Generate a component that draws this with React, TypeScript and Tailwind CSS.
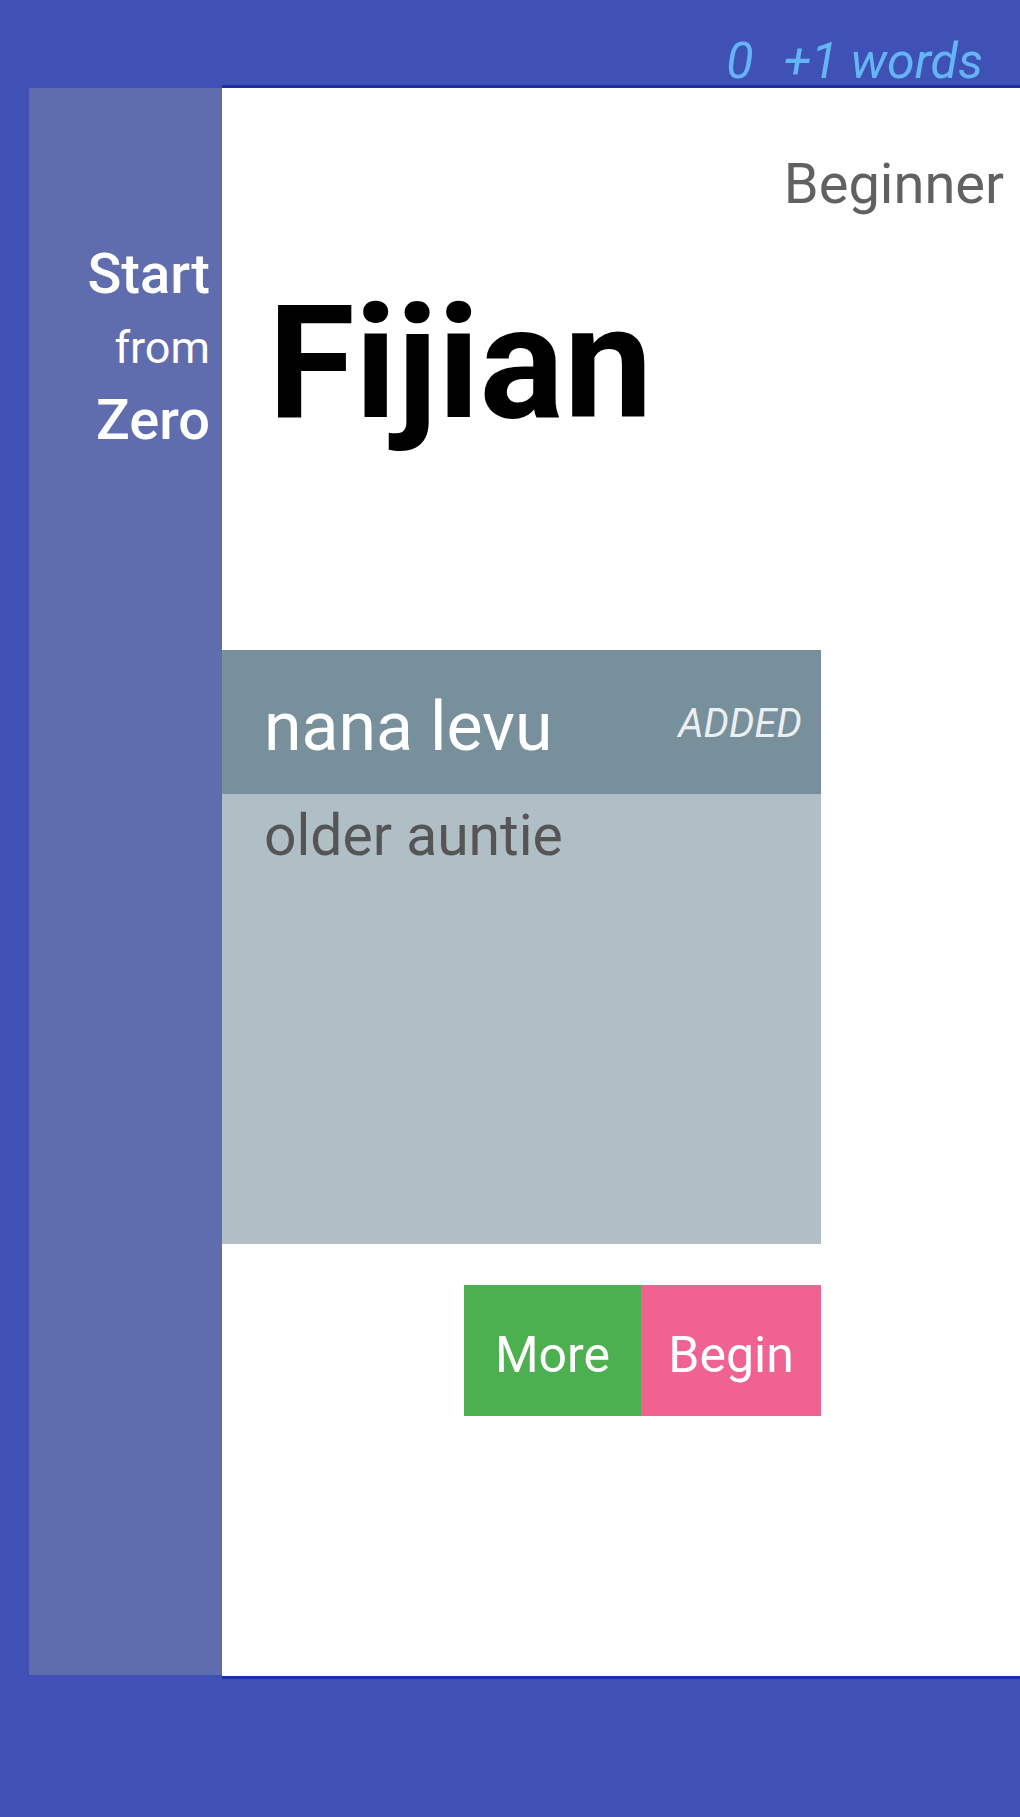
export default function App() {
  return (
    <div className="min-h-[1817px] overflow-hidden bg-[#3f51b5] font-['Roboto',sans-serif]">
      {/* top bar with word counter */}
      <div className="flex h-[85px] items-start justify-end pr-[37px] pt-[36px]">
        <span className="text-[50px] italic leading-none text-[#64b5f6]">
          0<span className="ml-[30px]">+1 words</span>
        </span>
      </div>

      <div className="flex">
        {/* left rail */}
        <aside className="ml-[29px] mt-[3px] h-[1587px] w-[193px] shrink-0 bg-[#5f6dae] pr-[12px] pt-[150px] text-right text-white">
          <div className="text-[56px] font-medium leading-[73px]">Start</div>
          <div className="text-[45px] leading-[73px]">from</div>
          <div className="text-[56px] font-medium leading-[73px]">Zero</div>
        </aside>

        {/* lesson panel */}
        <main className="h-[1594px] flex-1 border-y-[3px] border-[#1a30a8] bg-white">
          <div className="pr-[16px] pt-[68px] text-right text-[56px] leading-none text-[#616161]">
            Beginner
          </div>
          <h1 className="mt-[72px] pl-[46px] text-[158px] font-bold leading-none text-black">
            Fijian
          </h1>

          {/* word card */}
          <div className="mt-[208px] w-[599px]">
            <div className="flex h-[144px] items-center justify-between bg-[#78909c] pl-[42px] pr-[19px]">
              <span className="pt-[10px] text-[68px] leading-none text-white">nana levu</span>
              <span className="pt-[4px] text-[40px] italic leading-none text-[#eceff1]">ADDED</span>
            </div>
            <div className="h-[450px] bg-[#b0bec5] pl-[42px] pt-[13px]">
              <div className="text-[57px] leading-none text-[#555]">older auntie</div>
            </div>
          </div>

          <div className="mt-[41px] flex w-[599px] justify-end">
            <button className="h-[131px] w-[177px] bg-[#4caf50] pt-[10px] text-[50px] text-white">More</button>
            <button className="h-[131px] w-[180px] bg-[#f06292] pt-[10px] text-[50px] text-white">Begin</button>
          </div>
        </main>
      </div>
    </div>
  );
}
